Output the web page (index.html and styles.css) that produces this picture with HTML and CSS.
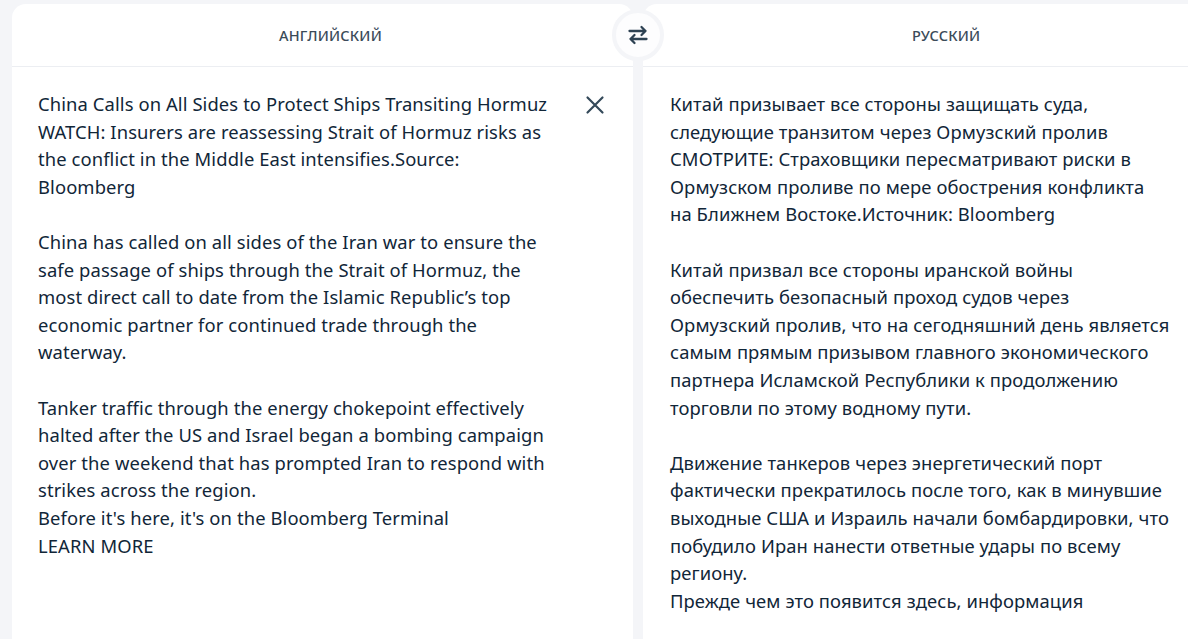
FILE: index.html
```html
<!DOCTYPE html>
<html lang="ru">
<head>
<meta charset="utf-8">
<link rel="stylesheet" href="styles.css">
</head>
<body>
<div class="page">
  <section class="card card-left">
    <header class="card-head head-left">АНГЛИЙСКИЙ</header>
    <div class="card-body">
      <div class="text">China Calls on All Sides to Protect Ships Transiting Hormuz<br>WATCH: Insurers are reassessing Strait of Hormuz risks as<br>the conflict in the Middle East intensifies.Source:<br>Bloomberg<br><br>China has called on all sides of the Iran war to ensure the<br>safe passage of ships through the Strait of Hormuz, the<br>most direct call to date from the Islamic Republic’s top<br>economic partner for continued trade through the<br>waterway.<br><br>Tanker traffic through the energy chokepoint effectively<br>halted after the US and Israel began a bombing campaign<br>over the weekend that has prompted Iran to respond with<br>strikes across the region.<br>Before it's here, it's on the Bloomberg Terminal<br>LEARN MORE</div>
      <button class="clear" aria-label="Очистить">
        <svg width="20" height="20" viewBox="0 0 20 20"><path d="M2.5 2.5 L17.5 17.5 M17.5 2.5 L2.5 17.5" stroke="#34495a" stroke-width="2.2" stroke-linecap="round" fill="none"/></svg>
      </button>
    </div>
  </section>
  <section class="card card-right">
    <header class="card-head head-right">РУССКИЙ</header>
    <div class="card-body">
      <div class="text">Китай призывает все стороны защищать суда,<br>следующие транзитом через Ормузский пролив<br>СМОТРИТЕ: Страховщики пересматривают риски в<br>Ормузском проливе по мере обострения конфликта<br>на Ближнем Востоке.Источник: Bloomberg<br><br>Китай призвал все стороны иранской войны<br>обеспечить безопасный проход судов через<br>Ормузский пролив, что на сегодняшний день является<br>самым прямым призывом главного экономического<br>партнера Исламской Республики к продолжению<br>торговли по этому водному пути.<br><br>Движение танкеров через энергетический порт<br>фактически прекратилось после того, как в минувшие<br>выходные США и Израиль начали бомбардировки, что<br>побудило Иран нанести ответные удары по всему<br>региону.<br>Прежде чем это появится здесь, информация</div>
    </div>
  </section>
  <button class="swap" aria-label="Поменять языки">
    <svg width="20" height="20" viewBox="0 0 20 20"><path d="M1.5 6 H17.5 M13.5 2 L17.5 6 L13.5 10 M18.5 14 H2.5 M6.5 10 L2.5 14 L6.5 18" stroke="#2e4253" stroke-width="2.3" stroke-linecap="round" stroke-linejoin="round" fill="none"/></svg>
  </button>
</div>
</body>
</html>
```

FILE: styles.css
```css
html, body {
  margin: 0;
  padding: 0;
  background: #f4f5f8;
}
body {
  font-family: "Noto Sans", "Open Sans", sans-serif;
  color: #112638;
}
.page {
  position: relative;
  display: flex;
  gap: 10px;
  padding: 4px 0 0 12px;
  width: 1188px;
  height: 639px;
  box-sizing: border-box;
  overflow: hidden;
}
.card {
  width: 621px;
  flex: none;
  background: #ffffff;
  border-radius: 14px 14px 0 0;
  height: 635px;
}
.card-head {
  height: 62px;
  border-bottom: 1px solid #eceef2;
  display: flex;
  align-items: center;
  font-size: 14.5px;
  font-weight: 500;
  color: #3b4b59;
  letter-spacing: 0.2px;
}
.head-left { padding-left: 267px; }
.head-right { padding-left: 269px; }
.card-body {
  position: relative;
  padding: 23px 26px 0 26px;
}
.card-right .card-body { padding-left: 27px; }
.text {
  font-size: 18.4px;
  line-height: 27.6px;
  letter-spacing: 0.1px;
  white-space: nowrap;
}
.clear {
  position: absolute;
  top: 28px;
  left: 573px;
  width: 20px;
  height: 20px;
  padding: 0;
  border: 0;
  background: none;
  display: flex;
}
.swap {
  position: absolute;
  left: 612px;
  top: 9px;
  width: 52px;
  height: 52px;
  border-radius: 50%;
  border: 4px solid #f4f5f8;
  background: #fdfdfe;
  padding: 0;
  display: flex;
  align-items: center;
  justify-content: center;
  box-sizing: border-box;
}
```
